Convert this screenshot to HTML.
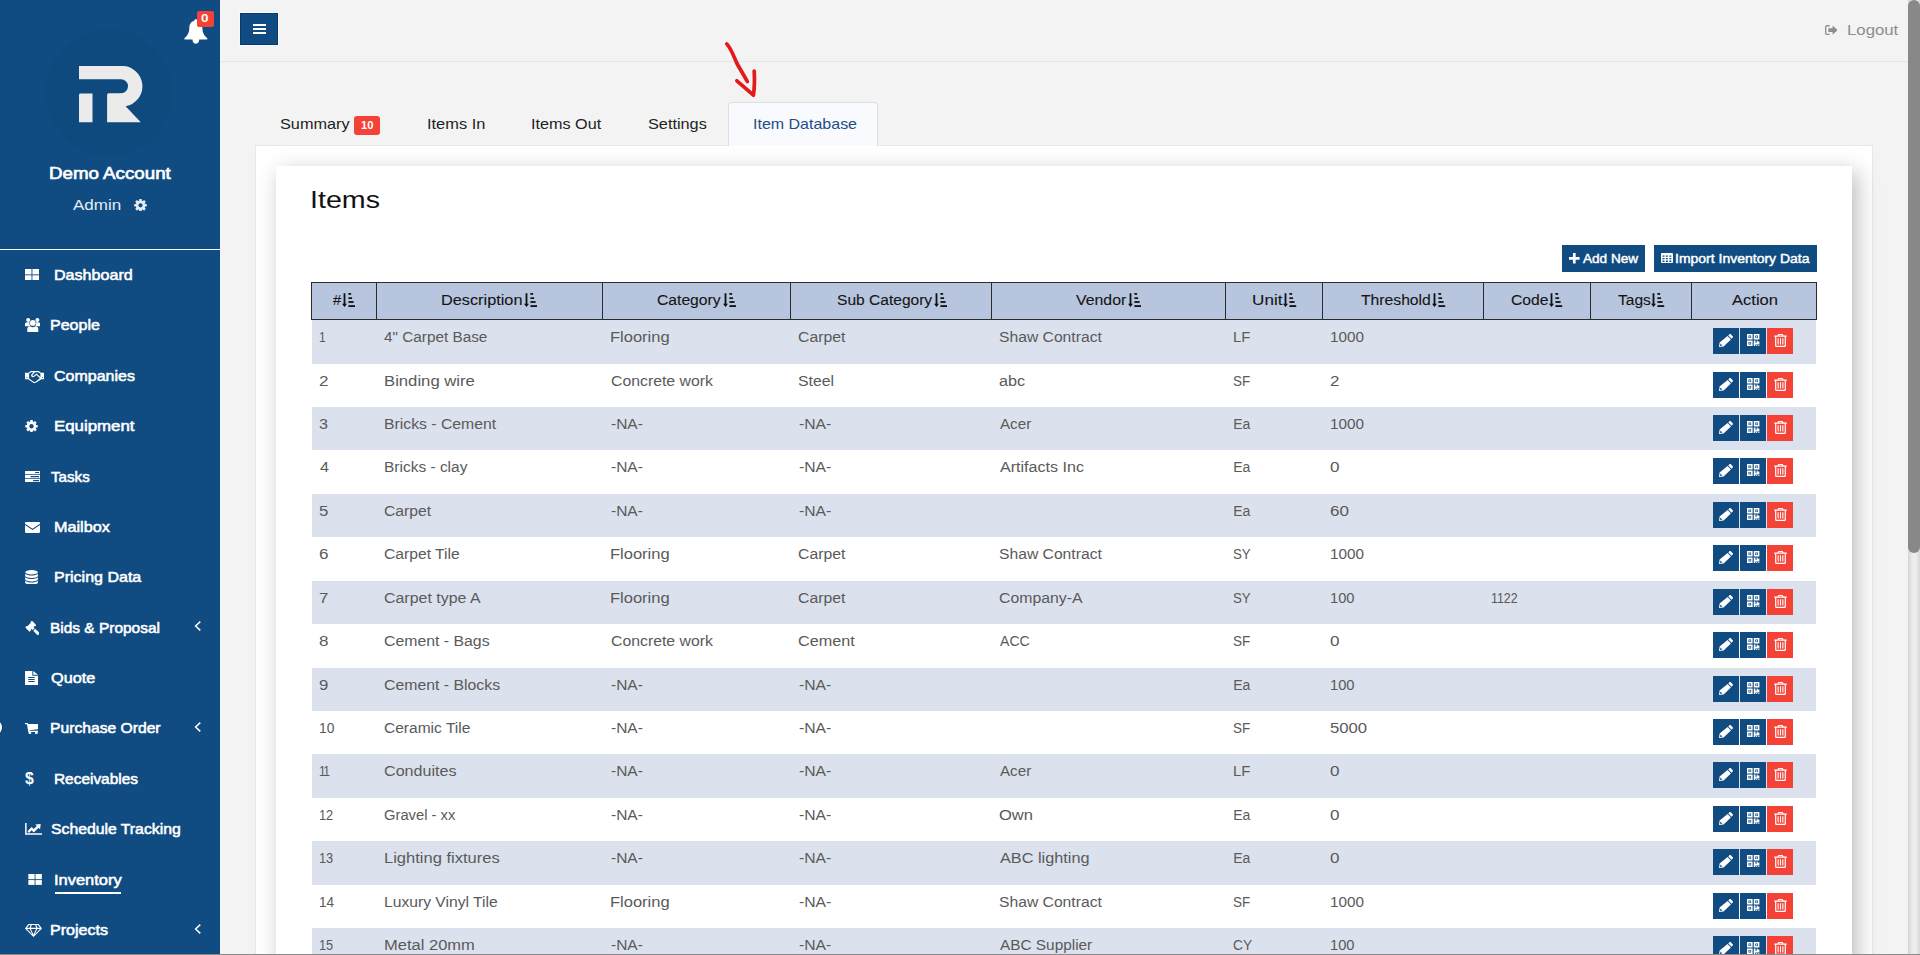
<!DOCTYPE html><html lang="en"><head><meta charset="utf-8"><title>Inventory - Item Database</title><style>
*{box-sizing:border-box;margin:0;padding:0}
html,body{width:1920px;height:955px;overflow:hidden}
body{background:#f3f3f3;font-family:"Liberation Sans", sans-serif;font-size:14px;color:#333;position:relative}
.abs{position:absolute}
.t{position:absolute;white-space:nowrap;line-height:1;transform-origin:0 0}
#side{position:absolute;left:0;top:0;width:220px;height:955px;background:#104b81;overflow:hidden}
#side .sep{position:absolute;left:0;top:249px;width:220px;height:1px;background:#fff}
#top{position:absolute;left:220px;top:0;width:1688px;height:62px;border-bottom:1px solid #e4e6e9}
#ham{position:absolute;left:240px;top:13px;width:38px;height:32px;background:#104b81;border:1px solid #053b70;box-shadow:0 0 0 1px #f9f9f9}
#panel{position:absolute;left:255px;top:145px;width:1618px;height:900px;background:#fff;border:1px solid #e4e8ee}
#card{position:absolute;left:276px;top:166px;width:1576px;height:900px;background:#fff;box-shadow:5px 6px 21px rgba(0,0,0,.27)}
#atab{position:absolute;left:728px;top:102px;width:150px;height:44px;background:#f8fafd;border:1px solid #dcdfe3;border-bottom:none;border-radius:4px 4px 0 0}
.btn{position:absolute;top:245px;height:27px;background:#104b81}
.th{position:absolute;top:282px;height:38px;background:#b7c6de;border:1px solid #2b2b2b}
.row{position:absolute;left:312px;width:1504px;background:#dbe1ed}
.ab{position:absolute;width:26px;height:26px}
#sb{position:absolute;left:1908px;top:0;width:12px;height:955px;background:linear-gradient(90deg,#d2d2d2 0,#e6e6e6 3px,#eeeeee 6px,#e8e8e8 9px,#d6d6d6 12px)}
#sbt{position:absolute;left:1908px;top:0;width:12px;height:553px;background:#888;border-radius:6px}
#bline{position:absolute;left:0;top:953.5px;width:1920px;height:1.5px;background:#8a8a8a}
</style></head><body>
<div id="top"></div><div id="ham"></div>
<div class="abs" style="left:253px;top:24px;width:13px;height:2px;background:#fff"></div>
<div class="abs" style="left:253px;top:28px;width:13px;height:2px;background:#fff"></div>
<div class="abs" style="left:253px;top:32px;width:13px;height:2px;background:#fff"></div>
<svg class="abs" style="left:1824.60px;top:24.80px" width="12.7" height="10.2" viewBox="0 0 12.7 10" fill="#8a8e92" ><path d="M4.6,0 V1.3 H2.2 C1.7,1.3 1.3,1.7 1.3,2.2 V7.8 C1.3,8.3 1.7,8.7 2.2,8.7 H4.6 V10 H2.2 C1,10 0,9 0,7.8 V2.2 C0,1 1,0 2.2,0Z"/><path d="M3.4,3.2 H7.6 V0.4 L12.7,5 L7.6,9.6 V6.8 H3.4Z"/></svg>
<div id="panel"></div><div id="atab"></div><div id="card"></div>
<div class="abs" style="left:354px;top:116px;width:26px;height:19px;background:#f44336;border-radius:3px"></div>
<svg class="abs" style="left:700px;top:30px" width="100" height="80" viewBox="700 30 100 80" fill="none" stroke="#e31a1a" stroke-width="3.7" stroke-linecap="round" stroke-linejoin="round"><path d="M726.8,44 C731,48 734,57 737,63.5 C740,69 745,77 747.3,81.5"/><path d="M736.9,80.8 L753.4,95.2 C754.5,88 754.6,78 754.2,71"/></svg>
<div class="btn" style="left:1562px;width:83px"></div>
<svg class="abs" style="left:1569.20px;top:253.20px" width="10.6" height="10.6" viewBox="0 0 11 11" fill="#fff" ><path d="M4.1,0 H6.9 V4.1 H11 V6.9 H6.9 V11 H4.1 V6.9 H0 V4.1 H4.1Z"/></svg>
<div class="btn" style="left:1654px;width:163px"></div>
<svg class="abs" style="left:1661.00px;top:253.20px" width="12" height="10" viewBox="0 0 12 10" fill="#fff" ><path fill-rule="evenodd" d="M1.1,0 H10.9 C11.5,0 12,0.5 12,1.1 V8.9 C12,9.5 11.5,10 10.9,10 H1.1 C0.5,10 0,9.5 0,8.9 V1.1 C0,0.5 0.5,0 1.1,0Z M1.50,2.42 V3.78 H3.50 V2.42Z M4.85,2.42 V3.78 H6.85 V2.42Z M8.30,2.42 V3.78 H10.30 V2.42Z M1.50,4.88 V6.22 H3.50 V4.88Z M4.85,4.88 V6.22 H6.85 V4.88Z M8.30,4.88 V6.22 H10.30 V4.88Z M1.50,7.58 V8.93 H3.50 V7.58Z M4.85,7.58 V8.93 H6.85 V7.58Z M8.30,7.58 V8.93 H10.30 V7.58Z"/></svg>
<div class="th" style="left:311px;width:66px"></div>
<div class="th" style="left:376px;width:227px"></div>
<div class="th" style="left:602px;width:189px"></div>
<div class="th" style="left:790px;width:202px"></div>
<div class="th" style="left:991px;width:235px"></div>
<div class="th" style="left:1225px;width:98px"></div>
<div class="th" style="left:1322px;width:162px"></div>
<div class="th" style="left:1483px;width:108px"></div>
<div class="th" style="left:1590px;width:102px"></div>
<div class="th" style="left:1691px;width:126px"></div>
<svg class="abs" style="left:341.80px;top:293.00px" width="13.5" height="14" viewBox="0 0 13.5 14" fill="#111" ><path d="M1.6,0.2 H3.4 V10.8 H5 L2.5,14 L0,10.8 H1.6Z"/><rect x="6.4" y="-0.2" width="2.7" height="2"/><rect x="6.4" y="4.3" width="3.7" height="1.7"/><rect x="6.4" y="8.1" width="5.2" height="1.8"/><rect x="6.4" y="12.2" width="6.8" height="1.8"/></svg>
<svg class="abs" style="left:523.70px;top:293.00px" width="13.5" height="14" viewBox="0 0 13.5 14" fill="#111" ><path d="M1.6,0.2 H3.4 V10.8 H5 L2.5,14 L0,10.8 H1.6Z"/><rect x="6.4" y="-0.2" width="2.7" height="2"/><rect x="6.4" y="4.3" width="3.7" height="1.7"/><rect x="6.4" y="8.1" width="5.2" height="1.8"/><rect x="6.4" y="12.2" width="6.8" height="1.8"/></svg>
<svg class="abs" style="left:722.70px;top:293.00px" width="13.5" height="14" viewBox="0 0 13.5 14" fill="#111" ><path d="M1.6,0.2 H3.4 V10.8 H5 L2.5,14 L0,10.8 H1.6Z"/><rect x="6.4" y="-0.2" width="2.7" height="2"/><rect x="6.4" y="4.3" width="3.7" height="1.7"/><rect x="6.4" y="8.1" width="5.2" height="1.8"/><rect x="6.4" y="12.2" width="6.8" height="1.8"/></svg>
<svg class="abs" style="left:933.50px;top:293.00px" width="13.5" height="14" viewBox="0 0 13.5 14" fill="#111" ><path d="M1.6,0.2 H3.4 V10.8 H5 L2.5,14 L0,10.8 H1.6Z"/><rect x="6.4" y="-0.2" width="2.7" height="2"/><rect x="6.4" y="4.3" width="3.7" height="1.7"/><rect x="6.4" y="8.1" width="5.2" height="1.8"/><rect x="6.4" y="12.2" width="6.8" height="1.8"/></svg>
<svg class="abs" style="left:1127.60px;top:293.00px" width="13.5" height="14" viewBox="0 0 13.5 14" fill="#111" ><path d="M1.6,0.2 H3.4 V10.8 H5 L2.5,14 L0,10.8 H1.6Z"/><rect x="6.4" y="-0.2" width="2.7" height="2"/><rect x="6.4" y="4.3" width="3.7" height="1.7"/><rect x="6.4" y="8.1" width="5.2" height="1.8"/><rect x="6.4" y="12.2" width="6.8" height="1.8"/></svg>
<svg class="abs" style="left:1283.30px;top:293.00px" width="13.5" height="14" viewBox="0 0 13.5 14" fill="#111" ><path d="M1.6,0.2 H3.4 V10.8 H5 L2.5,14 L0,10.8 H1.6Z"/><rect x="6.4" y="-0.2" width="2.7" height="2"/><rect x="6.4" y="4.3" width="3.7" height="1.7"/><rect x="6.4" y="8.1" width="5.2" height="1.8"/><rect x="6.4" y="12.2" width="6.8" height="1.8"/></svg>
<svg class="abs" style="left:1432.00px;top:293.00px" width="13.5" height="14" viewBox="0 0 13.5 14" fill="#111" ><path d="M1.6,0.2 H3.4 V10.8 H5 L2.5,14 L0,10.8 H1.6Z"/><rect x="6.4" y="-0.2" width="2.7" height="2"/><rect x="6.4" y="4.3" width="3.7" height="1.7"/><rect x="6.4" y="8.1" width="5.2" height="1.8"/><rect x="6.4" y="12.2" width="6.8" height="1.8"/></svg>
<svg class="abs" style="left:1549.20px;top:293.00px" width="13.5" height="14" viewBox="0 0 13.5 14" fill="#111" ><path d="M1.6,0.2 H3.4 V10.8 H5 L2.5,14 L0,10.8 H1.6Z"/><rect x="6.4" y="-0.2" width="2.7" height="2"/><rect x="6.4" y="4.3" width="3.7" height="1.7"/><rect x="6.4" y="8.1" width="5.2" height="1.8"/><rect x="6.4" y="12.2" width="6.8" height="1.8"/></svg>
<svg class="abs" style="left:1651.00px;top:293.00px" width="13.5" height="14" viewBox="0 0 13.5 14" fill="#111" ><path d="M1.6,0.2 H3.4 V10.8 H5 L2.5,14 L0,10.8 H1.6Z"/><rect x="6.4" y="-0.2" width="2.7" height="2"/><rect x="6.4" y="4.3" width="3.7" height="1.7"/><rect x="6.4" y="8.1" width="5.2" height="1.8"/><rect x="6.4" y="12.2" width="6.8" height="1.8"/></svg>
<div class="row" style="top:320px;height:44px"></div>
<div class="ab" style="left:1713px;top:328px;background:#104b81"></div>
<div class="ab" style="left:1740px;top:328px;background:#104b81"></div>
<div class="ab" style="left:1767px;top:328px;background:#f44336"></div>
<svg class="abs" style="left:1719.00px;top:334.00px" width="14" height="13" viewBox="0 0 14 13" fill="#fff" ><path d="M10.4,0.3 C10.8,-0.1 11.4,-0.1 11.8,0.3 L13.7,2.2 C14.1,2.6 14.1,3.2 13.7,3.6 L12.6,4.7 L9.3,1.4Z"/><path d="M8.6,2.1 L11.9,5.4 L4.6,12.4 L0,13 L0.6,8.6Z M1.4,9.6 L1.1,11.9 L3.4,11.6Z" fill-rule="evenodd"/></svg>
<svg class="abs" style="left:1747.00px;top:334.10px" width="12.8" height="12" viewBox="0 0 13 12" fill="#fff" ><path fill-rule="evenodd" d="M0,0 H5.7 V5.5 H0Z M1.5,1.5 V4 H4.2 V1.5Z M2.2,2.1 H3.5 V3.4 H2.2Z M6.9,0 H12.6 V5.5 H6.9Z M8.4,1.5 V4 H11.1 V1.5Z M9.1,2.1 H10.4 V3.4 H9.1Z M0,6.5 H5.7 V12 H0Z M1.5,8 V10.5 H4.2 V8Z M2.2,8.6 H3.5 V9.9 H2.2Z M6.9,6.5 H8.6 V8.8 H9.8 V6.5 H10.8 V7.6 H12.6 V10.6 H8.4 V12 H6.9Z M9.4,11.2 H10.4 V12 H9.4Z M11.6,11.2 H12.6 V12 H11.6Z"/></svg>
<svg class="abs" style="left:1773.90px;top:334.10px" width="13" height="13" viewBox="0 0 13 13" fill="#fff" ><path fill-rule="evenodd" d="M4.4,0 H8.6 L9.6,1.5 H12.4 C12.8,1.5 13,1.8 13,2.1 C13,2.5 12.8,2.7 12.4,2.7 H11.9 V11.4 C11.9,12.3 11.2,13 10.3,13 H2.7 C1.8,13 1.1,12.3 1.1,11.4 V2.7 H0.6 C0.2,2.7 0,2.5 0,2.1 C0,1.8 0.2,1.5 0.6,1.5 H3.4Z M5,1 L4.7,1.5 H8.3 L8,1Z M2.3,2.7 V11.3 C2.3,11.6 2.5,11.8 2.8,11.8 H10.2 C10.5,11.8 10.7,11.6 10.7,11.3 V2.7Z M3.6,4.2 H4.7 V10.4 H3.6Z M5.95,4.2 H7.05 V10.4 H5.95Z M8.3,4.2 H9.4 V10.4 H8.3Z"/></svg>
<div class="ab" style="left:1713px;top:372px;background:#104b81"></div>
<div class="ab" style="left:1740px;top:372px;background:#104b81"></div>
<div class="ab" style="left:1767px;top:372px;background:#f44336"></div>
<svg class="abs" style="left:1719.00px;top:378.00px" width="14" height="13" viewBox="0 0 14 13" fill="#fff" ><path d="M10.4,0.3 C10.8,-0.1 11.4,-0.1 11.8,0.3 L13.7,2.2 C14.1,2.6 14.1,3.2 13.7,3.6 L12.6,4.7 L9.3,1.4Z"/><path d="M8.6,2.1 L11.9,5.4 L4.6,12.4 L0,13 L0.6,8.6Z M1.4,9.6 L1.1,11.9 L3.4,11.6Z" fill-rule="evenodd"/></svg>
<svg class="abs" style="left:1747.00px;top:378.10px" width="12.8" height="12" viewBox="0 0 13 12" fill="#fff" ><path fill-rule="evenodd" d="M0,0 H5.7 V5.5 H0Z M1.5,1.5 V4 H4.2 V1.5Z M2.2,2.1 H3.5 V3.4 H2.2Z M6.9,0 H12.6 V5.5 H6.9Z M8.4,1.5 V4 H11.1 V1.5Z M9.1,2.1 H10.4 V3.4 H9.1Z M0,6.5 H5.7 V12 H0Z M1.5,8 V10.5 H4.2 V8Z M2.2,8.6 H3.5 V9.9 H2.2Z M6.9,6.5 H8.6 V8.8 H9.8 V6.5 H10.8 V7.6 H12.6 V10.6 H8.4 V12 H6.9Z M9.4,11.2 H10.4 V12 H9.4Z M11.6,11.2 H12.6 V12 H11.6Z"/></svg>
<svg class="abs" style="left:1773.90px;top:378.10px" width="13" height="13" viewBox="0 0 13 13" fill="#fff" ><path fill-rule="evenodd" d="M4.4,0 H8.6 L9.6,1.5 H12.4 C12.8,1.5 13,1.8 13,2.1 C13,2.5 12.8,2.7 12.4,2.7 H11.9 V11.4 C11.9,12.3 11.2,13 10.3,13 H2.7 C1.8,13 1.1,12.3 1.1,11.4 V2.7 H0.6 C0.2,2.7 0,2.5 0,2.1 C0,1.8 0.2,1.5 0.6,1.5 H3.4Z M5,1 L4.7,1.5 H8.3 L8,1Z M2.3,2.7 V11.3 C2.3,11.6 2.5,11.8 2.8,11.8 H10.2 C10.5,11.8 10.7,11.6 10.7,11.3 V2.7Z M3.6,4.2 H4.7 V10.4 H3.6Z M5.95,4.2 H7.05 V10.4 H5.95Z M8.3,4.2 H9.4 V10.4 H8.3Z"/></svg>
<div class="row" style="top:407px;height:43px"></div>
<div class="ab" style="left:1713px;top:415px;background:#104b81"></div>
<div class="ab" style="left:1740px;top:415px;background:#104b81"></div>
<div class="ab" style="left:1767px;top:415px;background:#f44336"></div>
<svg class="abs" style="left:1719.00px;top:421.00px" width="14" height="13" viewBox="0 0 14 13" fill="#fff" ><path d="M10.4,0.3 C10.8,-0.1 11.4,-0.1 11.8,0.3 L13.7,2.2 C14.1,2.6 14.1,3.2 13.7,3.6 L12.6,4.7 L9.3,1.4Z"/><path d="M8.6,2.1 L11.9,5.4 L4.6,12.4 L0,13 L0.6,8.6Z M1.4,9.6 L1.1,11.9 L3.4,11.6Z" fill-rule="evenodd"/></svg>
<svg class="abs" style="left:1747.00px;top:421.10px" width="12.8" height="12" viewBox="0 0 13 12" fill="#fff" ><path fill-rule="evenodd" d="M0,0 H5.7 V5.5 H0Z M1.5,1.5 V4 H4.2 V1.5Z M2.2,2.1 H3.5 V3.4 H2.2Z M6.9,0 H12.6 V5.5 H6.9Z M8.4,1.5 V4 H11.1 V1.5Z M9.1,2.1 H10.4 V3.4 H9.1Z M0,6.5 H5.7 V12 H0Z M1.5,8 V10.5 H4.2 V8Z M2.2,8.6 H3.5 V9.9 H2.2Z M6.9,6.5 H8.6 V8.8 H9.8 V6.5 H10.8 V7.6 H12.6 V10.6 H8.4 V12 H6.9Z M9.4,11.2 H10.4 V12 H9.4Z M11.6,11.2 H12.6 V12 H11.6Z"/></svg>
<svg class="abs" style="left:1773.90px;top:421.10px" width="13" height="13" viewBox="0 0 13 13" fill="#fff" ><path fill-rule="evenodd" d="M4.4,0 H8.6 L9.6,1.5 H12.4 C12.8,1.5 13,1.8 13,2.1 C13,2.5 12.8,2.7 12.4,2.7 H11.9 V11.4 C11.9,12.3 11.2,13 10.3,13 H2.7 C1.8,13 1.1,12.3 1.1,11.4 V2.7 H0.6 C0.2,2.7 0,2.5 0,2.1 C0,1.8 0.2,1.5 0.6,1.5 H3.4Z M5,1 L4.7,1.5 H8.3 L8,1Z M2.3,2.7 V11.3 C2.3,11.6 2.5,11.8 2.8,11.8 H10.2 C10.5,11.8 10.7,11.6 10.7,11.3 V2.7Z M3.6,4.2 H4.7 V10.4 H3.6Z M5.95,4.2 H7.05 V10.4 H5.95Z M8.3,4.2 H9.4 V10.4 H8.3Z"/></svg>
<div class="ab" style="left:1713px;top:458px;background:#104b81"></div>
<div class="ab" style="left:1740px;top:458px;background:#104b81"></div>
<div class="ab" style="left:1767px;top:458px;background:#f44336"></div>
<svg class="abs" style="left:1719.00px;top:464.00px" width="14" height="13" viewBox="0 0 14 13" fill="#fff" ><path d="M10.4,0.3 C10.8,-0.1 11.4,-0.1 11.8,0.3 L13.7,2.2 C14.1,2.6 14.1,3.2 13.7,3.6 L12.6,4.7 L9.3,1.4Z"/><path d="M8.6,2.1 L11.9,5.4 L4.6,12.4 L0,13 L0.6,8.6Z M1.4,9.6 L1.1,11.9 L3.4,11.6Z" fill-rule="evenodd"/></svg>
<svg class="abs" style="left:1747.00px;top:464.10px" width="12.8" height="12" viewBox="0 0 13 12" fill="#fff" ><path fill-rule="evenodd" d="M0,0 H5.7 V5.5 H0Z M1.5,1.5 V4 H4.2 V1.5Z M2.2,2.1 H3.5 V3.4 H2.2Z M6.9,0 H12.6 V5.5 H6.9Z M8.4,1.5 V4 H11.1 V1.5Z M9.1,2.1 H10.4 V3.4 H9.1Z M0,6.5 H5.7 V12 H0Z M1.5,8 V10.5 H4.2 V8Z M2.2,8.6 H3.5 V9.9 H2.2Z M6.9,6.5 H8.6 V8.8 H9.8 V6.5 H10.8 V7.6 H12.6 V10.6 H8.4 V12 H6.9Z M9.4,11.2 H10.4 V12 H9.4Z M11.6,11.2 H12.6 V12 H11.6Z"/></svg>
<svg class="abs" style="left:1773.90px;top:464.10px" width="13" height="13" viewBox="0 0 13 13" fill="#fff" ><path fill-rule="evenodd" d="M4.4,0 H8.6 L9.6,1.5 H12.4 C12.8,1.5 13,1.8 13,2.1 C13,2.5 12.8,2.7 12.4,2.7 H11.9 V11.4 C11.9,12.3 11.2,13 10.3,13 H2.7 C1.8,13 1.1,12.3 1.1,11.4 V2.7 H0.6 C0.2,2.7 0,2.5 0,2.1 C0,1.8 0.2,1.5 0.6,1.5 H3.4Z M5,1 L4.7,1.5 H8.3 L8,1Z M2.3,2.7 V11.3 C2.3,11.6 2.5,11.8 2.8,11.8 H10.2 C10.5,11.8 10.7,11.6 10.7,11.3 V2.7Z M3.6,4.2 H4.7 V10.4 H3.6Z M5.95,4.2 H7.05 V10.4 H5.95Z M8.3,4.2 H9.4 V10.4 H8.3Z"/></svg>
<div class="row" style="top:494px;height:43px"></div>
<div class="ab" style="left:1713px;top:502px;background:#104b81"></div>
<div class="ab" style="left:1740px;top:502px;background:#104b81"></div>
<div class="ab" style="left:1767px;top:502px;background:#f44336"></div>
<svg class="abs" style="left:1719.00px;top:508.00px" width="14" height="13" viewBox="0 0 14 13" fill="#fff" ><path d="M10.4,0.3 C10.8,-0.1 11.4,-0.1 11.8,0.3 L13.7,2.2 C14.1,2.6 14.1,3.2 13.7,3.6 L12.6,4.7 L9.3,1.4Z"/><path d="M8.6,2.1 L11.9,5.4 L4.6,12.4 L0,13 L0.6,8.6Z M1.4,9.6 L1.1,11.9 L3.4,11.6Z" fill-rule="evenodd"/></svg>
<svg class="abs" style="left:1747.00px;top:508.10px" width="12.8" height="12" viewBox="0 0 13 12" fill="#fff" ><path fill-rule="evenodd" d="M0,0 H5.7 V5.5 H0Z M1.5,1.5 V4 H4.2 V1.5Z M2.2,2.1 H3.5 V3.4 H2.2Z M6.9,0 H12.6 V5.5 H6.9Z M8.4,1.5 V4 H11.1 V1.5Z M9.1,2.1 H10.4 V3.4 H9.1Z M0,6.5 H5.7 V12 H0Z M1.5,8 V10.5 H4.2 V8Z M2.2,8.6 H3.5 V9.9 H2.2Z M6.9,6.5 H8.6 V8.8 H9.8 V6.5 H10.8 V7.6 H12.6 V10.6 H8.4 V12 H6.9Z M9.4,11.2 H10.4 V12 H9.4Z M11.6,11.2 H12.6 V12 H11.6Z"/></svg>
<svg class="abs" style="left:1773.90px;top:508.10px" width="13" height="13" viewBox="0 0 13 13" fill="#fff" ><path fill-rule="evenodd" d="M4.4,0 H8.6 L9.6,1.5 H12.4 C12.8,1.5 13,1.8 13,2.1 C13,2.5 12.8,2.7 12.4,2.7 H11.9 V11.4 C11.9,12.3 11.2,13 10.3,13 H2.7 C1.8,13 1.1,12.3 1.1,11.4 V2.7 H0.6 C0.2,2.7 0,2.5 0,2.1 C0,1.8 0.2,1.5 0.6,1.5 H3.4Z M5,1 L4.7,1.5 H8.3 L8,1Z M2.3,2.7 V11.3 C2.3,11.6 2.5,11.8 2.8,11.8 H10.2 C10.5,11.8 10.7,11.6 10.7,11.3 V2.7Z M3.6,4.2 H4.7 V10.4 H3.6Z M5.95,4.2 H7.05 V10.4 H5.95Z M8.3,4.2 H9.4 V10.4 H8.3Z"/></svg>
<div class="ab" style="left:1713px;top:545px;background:#104b81"></div>
<div class="ab" style="left:1740px;top:545px;background:#104b81"></div>
<div class="ab" style="left:1767px;top:545px;background:#f44336"></div>
<svg class="abs" style="left:1719.00px;top:551.00px" width="14" height="13" viewBox="0 0 14 13" fill="#fff" ><path d="M10.4,0.3 C10.8,-0.1 11.4,-0.1 11.8,0.3 L13.7,2.2 C14.1,2.6 14.1,3.2 13.7,3.6 L12.6,4.7 L9.3,1.4Z"/><path d="M8.6,2.1 L11.9,5.4 L4.6,12.4 L0,13 L0.6,8.6Z M1.4,9.6 L1.1,11.9 L3.4,11.6Z" fill-rule="evenodd"/></svg>
<svg class="abs" style="left:1747.00px;top:551.10px" width="12.8" height="12" viewBox="0 0 13 12" fill="#fff" ><path fill-rule="evenodd" d="M0,0 H5.7 V5.5 H0Z M1.5,1.5 V4 H4.2 V1.5Z M2.2,2.1 H3.5 V3.4 H2.2Z M6.9,0 H12.6 V5.5 H6.9Z M8.4,1.5 V4 H11.1 V1.5Z M9.1,2.1 H10.4 V3.4 H9.1Z M0,6.5 H5.7 V12 H0Z M1.5,8 V10.5 H4.2 V8Z M2.2,8.6 H3.5 V9.9 H2.2Z M6.9,6.5 H8.6 V8.8 H9.8 V6.5 H10.8 V7.6 H12.6 V10.6 H8.4 V12 H6.9Z M9.4,11.2 H10.4 V12 H9.4Z M11.6,11.2 H12.6 V12 H11.6Z"/></svg>
<svg class="abs" style="left:1773.90px;top:551.10px" width="13" height="13" viewBox="0 0 13 13" fill="#fff" ><path fill-rule="evenodd" d="M4.4,0 H8.6 L9.6,1.5 H12.4 C12.8,1.5 13,1.8 13,2.1 C13,2.5 12.8,2.7 12.4,2.7 H11.9 V11.4 C11.9,12.3 11.2,13 10.3,13 H2.7 C1.8,13 1.1,12.3 1.1,11.4 V2.7 H0.6 C0.2,2.7 0,2.5 0,2.1 C0,1.8 0.2,1.5 0.6,1.5 H3.4Z M5,1 L4.7,1.5 H8.3 L8,1Z M2.3,2.7 V11.3 C2.3,11.6 2.5,11.8 2.8,11.8 H10.2 C10.5,11.8 10.7,11.6 10.7,11.3 V2.7Z M3.6,4.2 H4.7 V10.4 H3.6Z M5.95,4.2 H7.05 V10.4 H5.95Z M8.3,4.2 H9.4 V10.4 H8.3Z"/></svg>
<div class="row" style="top:581px;height:43px"></div>
<div class="ab" style="left:1713px;top:589px;background:#104b81"></div>
<div class="ab" style="left:1740px;top:589px;background:#104b81"></div>
<div class="ab" style="left:1767px;top:589px;background:#f44336"></div>
<svg class="abs" style="left:1719.00px;top:595.00px" width="14" height="13" viewBox="0 0 14 13" fill="#fff" ><path d="M10.4,0.3 C10.8,-0.1 11.4,-0.1 11.8,0.3 L13.7,2.2 C14.1,2.6 14.1,3.2 13.7,3.6 L12.6,4.7 L9.3,1.4Z"/><path d="M8.6,2.1 L11.9,5.4 L4.6,12.4 L0,13 L0.6,8.6Z M1.4,9.6 L1.1,11.9 L3.4,11.6Z" fill-rule="evenodd"/></svg>
<svg class="abs" style="left:1747.00px;top:595.10px" width="12.8" height="12" viewBox="0 0 13 12" fill="#fff" ><path fill-rule="evenodd" d="M0,0 H5.7 V5.5 H0Z M1.5,1.5 V4 H4.2 V1.5Z M2.2,2.1 H3.5 V3.4 H2.2Z M6.9,0 H12.6 V5.5 H6.9Z M8.4,1.5 V4 H11.1 V1.5Z M9.1,2.1 H10.4 V3.4 H9.1Z M0,6.5 H5.7 V12 H0Z M1.5,8 V10.5 H4.2 V8Z M2.2,8.6 H3.5 V9.9 H2.2Z M6.9,6.5 H8.6 V8.8 H9.8 V6.5 H10.8 V7.6 H12.6 V10.6 H8.4 V12 H6.9Z M9.4,11.2 H10.4 V12 H9.4Z M11.6,11.2 H12.6 V12 H11.6Z"/></svg>
<svg class="abs" style="left:1773.90px;top:595.10px" width="13" height="13" viewBox="0 0 13 13" fill="#fff" ><path fill-rule="evenodd" d="M4.4,0 H8.6 L9.6,1.5 H12.4 C12.8,1.5 13,1.8 13,2.1 C13,2.5 12.8,2.7 12.4,2.7 H11.9 V11.4 C11.9,12.3 11.2,13 10.3,13 H2.7 C1.8,13 1.1,12.3 1.1,11.4 V2.7 H0.6 C0.2,2.7 0,2.5 0,2.1 C0,1.8 0.2,1.5 0.6,1.5 H3.4Z M5,1 L4.7,1.5 H8.3 L8,1Z M2.3,2.7 V11.3 C2.3,11.6 2.5,11.8 2.8,11.8 H10.2 C10.5,11.8 10.7,11.6 10.7,11.3 V2.7Z M3.6,4.2 H4.7 V10.4 H3.6Z M5.95,4.2 H7.05 V10.4 H5.95Z M8.3,4.2 H9.4 V10.4 H8.3Z"/></svg>
<div class="ab" style="left:1713px;top:632px;background:#104b81"></div>
<div class="ab" style="left:1740px;top:632px;background:#104b81"></div>
<div class="ab" style="left:1767px;top:632px;background:#f44336"></div>
<svg class="abs" style="left:1719.00px;top:638.00px" width="14" height="13" viewBox="0 0 14 13" fill="#fff" ><path d="M10.4,0.3 C10.8,-0.1 11.4,-0.1 11.8,0.3 L13.7,2.2 C14.1,2.6 14.1,3.2 13.7,3.6 L12.6,4.7 L9.3,1.4Z"/><path d="M8.6,2.1 L11.9,5.4 L4.6,12.4 L0,13 L0.6,8.6Z M1.4,9.6 L1.1,11.9 L3.4,11.6Z" fill-rule="evenodd"/></svg>
<svg class="abs" style="left:1747.00px;top:638.10px" width="12.8" height="12" viewBox="0 0 13 12" fill="#fff" ><path fill-rule="evenodd" d="M0,0 H5.7 V5.5 H0Z M1.5,1.5 V4 H4.2 V1.5Z M2.2,2.1 H3.5 V3.4 H2.2Z M6.9,0 H12.6 V5.5 H6.9Z M8.4,1.5 V4 H11.1 V1.5Z M9.1,2.1 H10.4 V3.4 H9.1Z M0,6.5 H5.7 V12 H0Z M1.5,8 V10.5 H4.2 V8Z M2.2,8.6 H3.5 V9.9 H2.2Z M6.9,6.5 H8.6 V8.8 H9.8 V6.5 H10.8 V7.6 H12.6 V10.6 H8.4 V12 H6.9Z M9.4,11.2 H10.4 V12 H9.4Z M11.6,11.2 H12.6 V12 H11.6Z"/></svg>
<svg class="abs" style="left:1773.90px;top:638.10px" width="13" height="13" viewBox="0 0 13 13" fill="#fff" ><path fill-rule="evenodd" d="M4.4,0 H8.6 L9.6,1.5 H12.4 C12.8,1.5 13,1.8 13,2.1 C13,2.5 12.8,2.7 12.4,2.7 H11.9 V11.4 C11.9,12.3 11.2,13 10.3,13 H2.7 C1.8,13 1.1,12.3 1.1,11.4 V2.7 H0.6 C0.2,2.7 0,2.5 0,2.1 C0,1.8 0.2,1.5 0.6,1.5 H3.4Z M5,1 L4.7,1.5 H8.3 L8,1Z M2.3,2.7 V11.3 C2.3,11.6 2.5,11.8 2.8,11.8 H10.2 C10.5,11.8 10.7,11.6 10.7,11.3 V2.7Z M3.6,4.2 H4.7 V10.4 H3.6Z M5.95,4.2 H7.05 V10.4 H5.95Z M8.3,4.2 H9.4 V10.4 H8.3Z"/></svg>
<div class="row" style="top:668px;height:43px"></div>
<div class="ab" style="left:1713px;top:676px;background:#104b81"></div>
<div class="ab" style="left:1740px;top:676px;background:#104b81"></div>
<div class="ab" style="left:1767px;top:676px;background:#f44336"></div>
<svg class="abs" style="left:1719.00px;top:682.00px" width="14" height="13" viewBox="0 0 14 13" fill="#fff" ><path d="M10.4,0.3 C10.8,-0.1 11.4,-0.1 11.8,0.3 L13.7,2.2 C14.1,2.6 14.1,3.2 13.7,3.6 L12.6,4.7 L9.3,1.4Z"/><path d="M8.6,2.1 L11.9,5.4 L4.6,12.4 L0,13 L0.6,8.6Z M1.4,9.6 L1.1,11.9 L3.4,11.6Z" fill-rule="evenodd"/></svg>
<svg class="abs" style="left:1747.00px;top:682.10px" width="12.8" height="12" viewBox="0 0 13 12" fill="#fff" ><path fill-rule="evenodd" d="M0,0 H5.7 V5.5 H0Z M1.5,1.5 V4 H4.2 V1.5Z M2.2,2.1 H3.5 V3.4 H2.2Z M6.9,0 H12.6 V5.5 H6.9Z M8.4,1.5 V4 H11.1 V1.5Z M9.1,2.1 H10.4 V3.4 H9.1Z M0,6.5 H5.7 V12 H0Z M1.5,8 V10.5 H4.2 V8Z M2.2,8.6 H3.5 V9.9 H2.2Z M6.9,6.5 H8.6 V8.8 H9.8 V6.5 H10.8 V7.6 H12.6 V10.6 H8.4 V12 H6.9Z M9.4,11.2 H10.4 V12 H9.4Z M11.6,11.2 H12.6 V12 H11.6Z"/></svg>
<svg class="abs" style="left:1773.90px;top:682.10px" width="13" height="13" viewBox="0 0 13 13" fill="#fff" ><path fill-rule="evenodd" d="M4.4,0 H8.6 L9.6,1.5 H12.4 C12.8,1.5 13,1.8 13,2.1 C13,2.5 12.8,2.7 12.4,2.7 H11.9 V11.4 C11.9,12.3 11.2,13 10.3,13 H2.7 C1.8,13 1.1,12.3 1.1,11.4 V2.7 H0.6 C0.2,2.7 0,2.5 0,2.1 C0,1.8 0.2,1.5 0.6,1.5 H3.4Z M5,1 L4.7,1.5 H8.3 L8,1Z M2.3,2.7 V11.3 C2.3,11.6 2.5,11.8 2.8,11.8 H10.2 C10.5,11.8 10.7,11.6 10.7,11.3 V2.7Z M3.6,4.2 H4.7 V10.4 H3.6Z M5.95,4.2 H7.05 V10.4 H5.95Z M8.3,4.2 H9.4 V10.4 H8.3Z"/></svg>
<div class="ab" style="left:1713px;top:719px;background:#104b81"></div>
<div class="ab" style="left:1740px;top:719px;background:#104b81"></div>
<div class="ab" style="left:1767px;top:719px;background:#f44336"></div>
<svg class="abs" style="left:1719.00px;top:725.00px" width="14" height="13" viewBox="0 0 14 13" fill="#fff" ><path d="M10.4,0.3 C10.8,-0.1 11.4,-0.1 11.8,0.3 L13.7,2.2 C14.1,2.6 14.1,3.2 13.7,3.6 L12.6,4.7 L9.3,1.4Z"/><path d="M8.6,2.1 L11.9,5.4 L4.6,12.4 L0,13 L0.6,8.6Z M1.4,9.6 L1.1,11.9 L3.4,11.6Z" fill-rule="evenodd"/></svg>
<svg class="abs" style="left:1747.00px;top:725.10px" width="12.8" height="12" viewBox="0 0 13 12" fill="#fff" ><path fill-rule="evenodd" d="M0,0 H5.7 V5.5 H0Z M1.5,1.5 V4 H4.2 V1.5Z M2.2,2.1 H3.5 V3.4 H2.2Z M6.9,0 H12.6 V5.5 H6.9Z M8.4,1.5 V4 H11.1 V1.5Z M9.1,2.1 H10.4 V3.4 H9.1Z M0,6.5 H5.7 V12 H0Z M1.5,8 V10.5 H4.2 V8Z M2.2,8.6 H3.5 V9.9 H2.2Z M6.9,6.5 H8.6 V8.8 H9.8 V6.5 H10.8 V7.6 H12.6 V10.6 H8.4 V12 H6.9Z M9.4,11.2 H10.4 V12 H9.4Z M11.6,11.2 H12.6 V12 H11.6Z"/></svg>
<svg class="abs" style="left:1773.90px;top:725.10px" width="13" height="13" viewBox="0 0 13 13" fill="#fff" ><path fill-rule="evenodd" d="M4.4,0 H8.6 L9.6,1.5 H12.4 C12.8,1.5 13,1.8 13,2.1 C13,2.5 12.8,2.7 12.4,2.7 H11.9 V11.4 C11.9,12.3 11.2,13 10.3,13 H2.7 C1.8,13 1.1,12.3 1.1,11.4 V2.7 H0.6 C0.2,2.7 0,2.5 0,2.1 C0,1.8 0.2,1.5 0.6,1.5 H3.4Z M5,1 L4.7,1.5 H8.3 L8,1Z M2.3,2.7 V11.3 C2.3,11.6 2.5,11.8 2.8,11.8 H10.2 C10.5,11.8 10.7,11.6 10.7,11.3 V2.7Z M3.6,4.2 H4.7 V10.4 H3.6Z M5.95,4.2 H7.05 V10.4 H5.95Z M8.3,4.2 H9.4 V10.4 H8.3Z"/></svg>
<div class="row" style="top:754px;height:44px"></div>
<div class="ab" style="left:1713px;top:762px;background:#104b81"></div>
<div class="ab" style="left:1740px;top:762px;background:#104b81"></div>
<div class="ab" style="left:1767px;top:762px;background:#f44336"></div>
<svg class="abs" style="left:1719.00px;top:768.00px" width="14" height="13" viewBox="0 0 14 13" fill="#fff" ><path d="M10.4,0.3 C10.8,-0.1 11.4,-0.1 11.8,0.3 L13.7,2.2 C14.1,2.6 14.1,3.2 13.7,3.6 L12.6,4.7 L9.3,1.4Z"/><path d="M8.6,2.1 L11.9,5.4 L4.6,12.4 L0,13 L0.6,8.6Z M1.4,9.6 L1.1,11.9 L3.4,11.6Z" fill-rule="evenodd"/></svg>
<svg class="abs" style="left:1747.00px;top:768.10px" width="12.8" height="12" viewBox="0 0 13 12" fill="#fff" ><path fill-rule="evenodd" d="M0,0 H5.7 V5.5 H0Z M1.5,1.5 V4 H4.2 V1.5Z M2.2,2.1 H3.5 V3.4 H2.2Z M6.9,0 H12.6 V5.5 H6.9Z M8.4,1.5 V4 H11.1 V1.5Z M9.1,2.1 H10.4 V3.4 H9.1Z M0,6.5 H5.7 V12 H0Z M1.5,8 V10.5 H4.2 V8Z M2.2,8.6 H3.5 V9.9 H2.2Z M6.9,6.5 H8.6 V8.8 H9.8 V6.5 H10.8 V7.6 H12.6 V10.6 H8.4 V12 H6.9Z M9.4,11.2 H10.4 V12 H9.4Z M11.6,11.2 H12.6 V12 H11.6Z"/></svg>
<svg class="abs" style="left:1773.90px;top:768.10px" width="13" height="13" viewBox="0 0 13 13" fill="#fff" ><path fill-rule="evenodd" d="M4.4,0 H8.6 L9.6,1.5 H12.4 C12.8,1.5 13,1.8 13,2.1 C13,2.5 12.8,2.7 12.4,2.7 H11.9 V11.4 C11.9,12.3 11.2,13 10.3,13 H2.7 C1.8,13 1.1,12.3 1.1,11.4 V2.7 H0.6 C0.2,2.7 0,2.5 0,2.1 C0,1.8 0.2,1.5 0.6,1.5 H3.4Z M5,1 L4.7,1.5 H8.3 L8,1Z M2.3,2.7 V11.3 C2.3,11.6 2.5,11.8 2.8,11.8 H10.2 C10.5,11.8 10.7,11.6 10.7,11.3 V2.7Z M3.6,4.2 H4.7 V10.4 H3.6Z M5.95,4.2 H7.05 V10.4 H5.95Z M8.3,4.2 H9.4 V10.4 H8.3Z"/></svg>
<div class="ab" style="left:1713px;top:806px;background:#104b81"></div>
<div class="ab" style="left:1740px;top:806px;background:#104b81"></div>
<div class="ab" style="left:1767px;top:806px;background:#f44336"></div>
<svg class="abs" style="left:1719.00px;top:812.00px" width="14" height="13" viewBox="0 0 14 13" fill="#fff" ><path d="M10.4,0.3 C10.8,-0.1 11.4,-0.1 11.8,0.3 L13.7,2.2 C14.1,2.6 14.1,3.2 13.7,3.6 L12.6,4.7 L9.3,1.4Z"/><path d="M8.6,2.1 L11.9,5.4 L4.6,12.4 L0,13 L0.6,8.6Z M1.4,9.6 L1.1,11.9 L3.4,11.6Z" fill-rule="evenodd"/></svg>
<svg class="abs" style="left:1747.00px;top:812.10px" width="12.8" height="12" viewBox="0 0 13 12" fill="#fff" ><path fill-rule="evenodd" d="M0,0 H5.7 V5.5 H0Z M1.5,1.5 V4 H4.2 V1.5Z M2.2,2.1 H3.5 V3.4 H2.2Z M6.9,0 H12.6 V5.5 H6.9Z M8.4,1.5 V4 H11.1 V1.5Z M9.1,2.1 H10.4 V3.4 H9.1Z M0,6.5 H5.7 V12 H0Z M1.5,8 V10.5 H4.2 V8Z M2.2,8.6 H3.5 V9.9 H2.2Z M6.9,6.5 H8.6 V8.8 H9.8 V6.5 H10.8 V7.6 H12.6 V10.6 H8.4 V12 H6.9Z M9.4,11.2 H10.4 V12 H9.4Z M11.6,11.2 H12.6 V12 H11.6Z"/></svg>
<svg class="abs" style="left:1773.90px;top:812.10px" width="13" height="13" viewBox="0 0 13 13" fill="#fff" ><path fill-rule="evenodd" d="M4.4,0 H8.6 L9.6,1.5 H12.4 C12.8,1.5 13,1.8 13,2.1 C13,2.5 12.8,2.7 12.4,2.7 H11.9 V11.4 C11.9,12.3 11.2,13 10.3,13 H2.7 C1.8,13 1.1,12.3 1.1,11.4 V2.7 H0.6 C0.2,2.7 0,2.5 0,2.1 C0,1.8 0.2,1.5 0.6,1.5 H3.4Z M5,1 L4.7,1.5 H8.3 L8,1Z M2.3,2.7 V11.3 C2.3,11.6 2.5,11.8 2.8,11.8 H10.2 C10.5,11.8 10.7,11.6 10.7,11.3 V2.7Z M3.6,4.2 H4.7 V10.4 H3.6Z M5.95,4.2 H7.05 V10.4 H5.95Z M8.3,4.2 H9.4 V10.4 H8.3Z"/></svg>
<div class="row" style="top:841px;height:44px"></div>
<div class="ab" style="left:1713px;top:849px;background:#104b81"></div>
<div class="ab" style="left:1740px;top:849px;background:#104b81"></div>
<div class="ab" style="left:1767px;top:849px;background:#f44336"></div>
<svg class="abs" style="left:1719.00px;top:855.00px" width="14" height="13" viewBox="0 0 14 13" fill="#fff" ><path d="M10.4,0.3 C10.8,-0.1 11.4,-0.1 11.8,0.3 L13.7,2.2 C14.1,2.6 14.1,3.2 13.7,3.6 L12.6,4.7 L9.3,1.4Z"/><path d="M8.6,2.1 L11.9,5.4 L4.6,12.4 L0,13 L0.6,8.6Z M1.4,9.6 L1.1,11.9 L3.4,11.6Z" fill-rule="evenodd"/></svg>
<svg class="abs" style="left:1747.00px;top:855.10px" width="12.8" height="12" viewBox="0 0 13 12" fill="#fff" ><path fill-rule="evenodd" d="M0,0 H5.7 V5.5 H0Z M1.5,1.5 V4 H4.2 V1.5Z M2.2,2.1 H3.5 V3.4 H2.2Z M6.9,0 H12.6 V5.5 H6.9Z M8.4,1.5 V4 H11.1 V1.5Z M9.1,2.1 H10.4 V3.4 H9.1Z M0,6.5 H5.7 V12 H0Z M1.5,8 V10.5 H4.2 V8Z M2.2,8.6 H3.5 V9.9 H2.2Z M6.9,6.5 H8.6 V8.8 H9.8 V6.5 H10.8 V7.6 H12.6 V10.6 H8.4 V12 H6.9Z M9.4,11.2 H10.4 V12 H9.4Z M11.6,11.2 H12.6 V12 H11.6Z"/></svg>
<svg class="abs" style="left:1773.90px;top:855.10px" width="13" height="13" viewBox="0 0 13 13" fill="#fff" ><path fill-rule="evenodd" d="M4.4,0 H8.6 L9.6,1.5 H12.4 C12.8,1.5 13,1.8 13,2.1 C13,2.5 12.8,2.7 12.4,2.7 H11.9 V11.4 C11.9,12.3 11.2,13 10.3,13 H2.7 C1.8,13 1.1,12.3 1.1,11.4 V2.7 H0.6 C0.2,2.7 0,2.5 0,2.1 C0,1.8 0.2,1.5 0.6,1.5 H3.4Z M5,1 L4.7,1.5 H8.3 L8,1Z M2.3,2.7 V11.3 C2.3,11.6 2.5,11.8 2.8,11.8 H10.2 C10.5,11.8 10.7,11.6 10.7,11.3 V2.7Z M3.6,4.2 H4.7 V10.4 H3.6Z M5.95,4.2 H7.05 V10.4 H5.95Z M8.3,4.2 H9.4 V10.4 H8.3Z"/></svg>
<div class="ab" style="left:1713px;top:893px;background:#104b81"></div>
<div class="ab" style="left:1740px;top:893px;background:#104b81"></div>
<div class="ab" style="left:1767px;top:893px;background:#f44336"></div>
<svg class="abs" style="left:1719.00px;top:899.00px" width="14" height="13" viewBox="0 0 14 13" fill="#fff" ><path d="M10.4,0.3 C10.8,-0.1 11.4,-0.1 11.8,0.3 L13.7,2.2 C14.1,2.6 14.1,3.2 13.7,3.6 L12.6,4.7 L9.3,1.4Z"/><path d="M8.6,2.1 L11.9,5.4 L4.6,12.4 L0,13 L0.6,8.6Z M1.4,9.6 L1.1,11.9 L3.4,11.6Z" fill-rule="evenodd"/></svg>
<svg class="abs" style="left:1747.00px;top:899.10px" width="12.8" height="12" viewBox="0 0 13 12" fill="#fff" ><path fill-rule="evenodd" d="M0,0 H5.7 V5.5 H0Z M1.5,1.5 V4 H4.2 V1.5Z M2.2,2.1 H3.5 V3.4 H2.2Z M6.9,0 H12.6 V5.5 H6.9Z M8.4,1.5 V4 H11.1 V1.5Z M9.1,2.1 H10.4 V3.4 H9.1Z M0,6.5 H5.7 V12 H0Z M1.5,8 V10.5 H4.2 V8Z M2.2,8.6 H3.5 V9.9 H2.2Z M6.9,6.5 H8.6 V8.8 H9.8 V6.5 H10.8 V7.6 H12.6 V10.6 H8.4 V12 H6.9Z M9.4,11.2 H10.4 V12 H9.4Z M11.6,11.2 H12.6 V12 H11.6Z"/></svg>
<svg class="abs" style="left:1773.90px;top:899.10px" width="13" height="13" viewBox="0 0 13 13" fill="#fff" ><path fill-rule="evenodd" d="M4.4,0 H8.6 L9.6,1.5 H12.4 C12.8,1.5 13,1.8 13,2.1 C13,2.5 12.8,2.7 12.4,2.7 H11.9 V11.4 C11.9,12.3 11.2,13 10.3,13 H2.7 C1.8,13 1.1,12.3 1.1,11.4 V2.7 H0.6 C0.2,2.7 0,2.5 0,2.1 C0,1.8 0.2,1.5 0.6,1.5 H3.4Z M5,1 L4.7,1.5 H8.3 L8,1Z M2.3,2.7 V11.3 C2.3,11.6 2.5,11.8 2.8,11.8 H10.2 C10.5,11.8 10.7,11.6 10.7,11.3 V2.7Z M3.6,4.2 H4.7 V10.4 H3.6Z M5.95,4.2 H7.05 V10.4 H5.95Z M8.3,4.2 H9.4 V10.4 H8.3Z"/></svg>
<div class="row" style="top:928px;height:43px"></div>
<div class="ab" style="left:1713px;top:936px;background:#104b81"></div>
<div class="ab" style="left:1740px;top:936px;background:#104b81"></div>
<div class="ab" style="left:1767px;top:936px;background:#f44336"></div>
<svg class="abs" style="left:1719.00px;top:942.00px" width="14" height="13" viewBox="0 0 14 13" fill="#fff" ><path d="M10.4,0.3 C10.8,-0.1 11.4,-0.1 11.8,0.3 L13.7,2.2 C14.1,2.6 14.1,3.2 13.7,3.6 L12.6,4.7 L9.3,1.4Z"/><path d="M8.6,2.1 L11.9,5.4 L4.6,12.4 L0,13 L0.6,8.6Z M1.4,9.6 L1.1,11.9 L3.4,11.6Z" fill-rule="evenodd"/></svg>
<svg class="abs" style="left:1747.00px;top:942.10px" width="12.8" height="12" viewBox="0 0 13 12" fill="#fff" ><path fill-rule="evenodd" d="M0,0 H5.7 V5.5 H0Z M1.5,1.5 V4 H4.2 V1.5Z M2.2,2.1 H3.5 V3.4 H2.2Z M6.9,0 H12.6 V5.5 H6.9Z M8.4,1.5 V4 H11.1 V1.5Z M9.1,2.1 H10.4 V3.4 H9.1Z M0,6.5 H5.7 V12 H0Z M1.5,8 V10.5 H4.2 V8Z M2.2,8.6 H3.5 V9.9 H2.2Z M6.9,6.5 H8.6 V8.8 H9.8 V6.5 H10.8 V7.6 H12.6 V10.6 H8.4 V12 H6.9Z M9.4,11.2 H10.4 V12 H9.4Z M11.6,11.2 H12.6 V12 H11.6Z"/></svg>
<svg class="abs" style="left:1773.90px;top:942.10px" width="13" height="13" viewBox="0 0 13 13" fill="#fff" ><path fill-rule="evenodd" d="M4.4,0 H8.6 L9.6,1.5 H12.4 C12.8,1.5 13,1.8 13,2.1 C13,2.5 12.8,2.7 12.4,2.7 H11.9 V11.4 C11.9,12.3 11.2,13 10.3,13 H2.7 C1.8,13 1.1,12.3 1.1,11.4 V2.7 H0.6 C0.2,2.7 0,2.5 0,2.1 C0,1.8 0.2,1.5 0.6,1.5 H3.4Z M5,1 L4.7,1.5 H8.3 L8,1Z M2.3,2.7 V11.3 C2.3,11.6 2.5,11.8 2.8,11.8 H10.2 C10.5,11.8 10.7,11.6 10.7,11.3 V2.7Z M3.6,4.2 H4.7 V10.4 H3.6Z M5.95,4.2 H7.05 V10.4 H5.95Z M8.3,4.2 H9.4 V10.4 H8.3Z"/></svg>
<div id="side"><div class="sep"></div></div>
<div class="abs" style="left:44.5px;top:29px;width:128px;height:128px;border-radius:50%;background:rgba(0,0,30,.006)"></div>
<svg class="abs" style="left:184.30px;top:18.90px" width="23.7" height="25" viewBox="0 0 24 25" fill="#fff" ><path d="M12,0 C13,0 13.6,0.7 13.6,1.6 C17.2,2.5 18.6,5.6 18.6,9 C18.6,13.6 20.2,16.6 23.6,19.4 C23.9,19.7 23.8,20.6 23,20.6 H15.4 C15.4,23.6 13.6,25 12,25 C10.4,25 8.6,23.6 8.6,20.6 H1 C0.2,20.6 0.1,19.7 0.4,19.4 C3.8,16.6 5.4,13.6 5.4,9 C5.4,5.6 6.8,2.5 10.4,1.6 C10.4,0.7 11,0 12,0Z"/></svg>
<div class="abs" style="left:197px;top:11px;width:17px;height:16px;background:#f44336;border-radius:2px"></div>
<svg class="abs" style="left:79px;top:66px" width="64" height="57" viewBox="0 0 64 57" fill="#ebebeb"><path d="M0,0 H42.75 A20.25,20.25 0 0 1 46.6,40.2 L61.8,56.3 H28.1 V28.8 Q28.1,27.2 29.7,27.2 H42 A7,7 0 0 0 42,13.2 H0Z"/><path d="M0,29 Q0,27.6 1.4,27.6 H13.5 V56.3 H0Z"/></svg>
<svg class="abs" style="left:134.00px;top:198.70px" width="13" height="12.6" viewBox="0 0 13 13" fill="#e6ebf2" ><path fill-rule="evenodd" d="M5.16,1.68 L5.19,0.03 L7.81,0.03 L7.84,1.68 L8.96,2.15 L10.15,1.00 L12.00,2.85 L10.85,4.04 L11.32,5.16 L12.97,5.19 L12.97,7.81 L11.32,7.84 L10.85,8.96 L12.00,10.15 L10.15,12.00 L8.96,10.85 L7.84,11.32 L7.81,12.97 L5.19,12.97 L5.16,11.32 L4.04,10.85 L2.85,12.00 L1.00,10.15 L2.15,8.96 L1.68,7.84 L0.03,7.81 L0.03,5.19 L1.68,5.16 L2.15,4.04 L1.00,2.85 L2.85,1.00 L4.04,2.15Z M4.30,6.50 a2.2,2.2 0 1,0 4.4,0 a2.2,2.2 0 1,0 -4.4,0Z"/></svg>
<div class="abs" style="left:-15.6px;top:719.2px;width:17.4px;height:17.2px;border-radius:50%;background:#fff;box-shadow:0 0 0 1px #0a3c70"></div>
<svg class="abs" style="left:24.60px;top:268.80px" width="14" height="11.3" viewBox="0 0 14 11.3" fill="#fff" ><rect x="0" y="0" width="6.5" height="5.4"/><rect x="7.4" y="0" width="6.6" height="5.4"/><rect x="0" y="6.3" width="6.5" height="5"/><rect x="7.4" y="6.3" width="6.6" height="5"/></svg>
<svg class="abs" style="left:24.90px;top:317.70px" width="15.6" height="14.3" viewBox="0 0 15.6 14.3" fill="#fff" ><circle cx="3.2" cy="2" r="2"/><circle cx="12.4" cy="2" r="2"/><path d="M0,8.3 V6.4 C0,5 1,4.3 2.2,4.3 H4.6 C4.2,5.6 4.5,7 5.5,8.3Z"/><path d="M15.6,8.3 V6.4 C15.6,5 14.6,4.3 13.4,4.3 H11 C11.4,5.6 11.1,7 10.1,8.3Z"/><circle cx="7.8" cy="4.9" r="2.9"/><path d="M2.3,14.3 V11 C2.3,9.2 3.6,8.4 5,8.3 C5.8,8.9 6.8,9.2 7.8,9.2 C8.8,9.2 9.8,8.9 10.6,8.3 C12,8.4 13.3,9.2 13.3,11 V14.3Z"/></svg>
<svg class="abs" style="left:24.60px;top:370.90px" width="19.5" height="12" viewBox="0 0 19.5 12" fill="#fff" ><path fill-rule="evenodd" d="M0,1.8 H3.6 L5.8,0 H13.7 L15.9,1.8 H19.5 V8.2 H16.4 L10.4,12 H8.6 L3.1,8.2 H0Z M1.5,6.5 a0.5,0.5 0 1,0 1,0 a0.5,0.5 0 1,0 -1,0Z M17,6.5 a0.5,0.5 0 1,0 1,0 a0.5,0.5 0 1,0 -1,0Z M4.1,2.6 V7.5 L8.6,10.7 C9.1,11.1 9.9,11.1 10.4,10.7 L14.9,7.2 L11.4,3.9 L9.6,5.5 C8.6,6.4 7.2,6.3 6.5,5.5 C5.9,4.8 6,3.9 6.6,3.3 L8.4,1.3 H6.2Z M10,1.3 L7.7,3.8 C7.4,4.2 7.5,4.6 7.7,4.8 C8,5.1 8.5,5 8.8,4.8 L11.4,2.4 L15.4,6.1 V2.7 L13.3,1.3Z"/></svg>
<svg class="abs" style="left:24.60px;top:419.80px" width="13" height="12.4" viewBox="0 0 13 13" fill="#fff" ><path fill-rule="evenodd" d="M5.16,1.68 L5.19,0.03 L7.81,0.03 L7.84,1.68 L8.96,2.15 L10.15,1.00 L12.00,2.85 L10.85,4.04 L11.32,5.16 L12.97,5.19 L12.97,7.81 L11.32,7.84 L10.85,8.96 L12.00,10.15 L10.15,12.00 L8.96,10.85 L7.84,11.32 L7.81,12.97 L5.19,12.97 L5.16,11.32 L4.04,10.85 L2.85,12.00 L1.00,10.15 L2.15,8.96 L1.68,7.84 L0.03,7.81 L0.03,5.19 L1.68,5.16 L2.15,4.04 L1.00,2.85 L2.85,1.00 L4.04,2.15Z M4.20,6.50 a2.3,2.3 0 1,0 4.6,0 a2.3,2.3 0 1,0 -4.6,0Z"/></svg>
<svg class="abs" style="left:24.60px;top:471.00px" width="15.2" height="11.1" viewBox="0 0 15 11" fill="#fff" ><path fill-rule="evenodd" d="M0,0 H15 V3.1 H0Z M10,1 V2.1 H14 V1Z M0,4 H15 V7.1 H0Z M5.5,5 V6.1 H14 V5Z M0,8 H15 V11 H0Z M8,9 V10.1 H14 V9Z"/></svg>
<svg class="abs" style="left:24.60px;top:521.90px" width="15" height="11.1" viewBox="0 0 15 11" fill="#fff" ><path d="M1.2,0 H13.8 C14.5,0 15,0.5 15,1.2 V1.6 L7.5,6.6 L0,1.6 V1.2 C0,0.5 0.5,0 1.2,0Z"/><path d="M0,2.9 L7.5,7.9 L15,2.9 V9.8 C15,10.5 14.5,11 13.8,11 H1.2 C0.5,11 0,10.5 0,9.8Z"/></svg>
<svg class="abs" style="left:24.60px;top:569.60px" width="13.1" height="14.7" viewBox="0 0 13 15" fill="#fff" ><ellipse cx="6.5" cy="2.3" rx="6.5" ry="2.3"/><path d="M0,3.9 C1.2,5.2 3.8,5.7 6.5,5.7 C9.2,5.7 11.8,5.2 13,3.9 V5.9 C13,7.2 10.1,8.2 6.5,8.2 C2.9,8.2 0,7.2 0,5.9Z"/><path d="M0,7.4 C1.2,8.7 3.8,9.2 6.5,9.2 C9.2,9.2 11.8,8.7 13,7.4 V9.4 C13,10.7 10.1,11.7 6.5,11.7 C2.9,11.7 0,10.7 0,9.4Z"/><path d="M0,10.9 C1.2,12.2 3.8,12.7 6.5,12.7 C9.2,12.7 11.8,12.2 13,10.9 V12.7 C13,14 10.1,15 6.5,15 C2.9,15 0,14 0,12.7Z"/></svg>
<svg class="abs" style="left:24.90px;top:620.90px" width="14.5" height="14" viewBox="0 0 14.5 14" fill="#fff" ><path d="M6.3,0.3 C6.7,-0.1 7.2,-0.1 7.6,0.3 L10.7,3.4 C11.1,3.8 11.1,4.3 10.7,4.7 L10.2,5.2 C9.9,5.5 9.5,5.5 9.1,5.3 L8.4,6 L9.6,7.2 L7.7,9.1 L6.5,7.9 L5.8,8.6 C6,9 6,9.4 5.7,9.7 L5.2,10.2 C4.8,10.6 4.3,10.6 3.9,10.2 L0.8,7.1 C0.4,6.7 0.4,6.2 0.8,5.8 L1.3,5.3 C1.6,5 2,5 2.4,5.2 L5.7,1.9 C5.5,1.5 5.5,1.1 5.8,0.8Z"/><path d="M10.2,7.8 L13.9,11.3 C14.6,12 14.6,12.9 14,13.5 C13.4,14.1 12.5,14.1 11.8,13.4 L8.3,9.7Z"/></svg>
<svg class="abs" style="left:24.60px;top:671.00px" width="13.1" height="14" viewBox="0 0 13 14" fill="#fff" ><path fill-rule="evenodd" d="M0,0 H7.3 V4.7 H13 V14 H0Z M3.2,6 V7 H9.6 V6Z M3.2,8 V9 H9.6 V8Z M3.2,10 V11 H9.6 V10Z"/><path d="M8.2,0 L13,3.8 H8.2Z"/></svg>
<svg class="abs" style="left:24.60px;top:722.80px" width="13.8" height="11" viewBox="0 0 14 11" fill="#fff" ><path d="M0,0 H2.3 C2.9,0 3.2,0.3 3.3,0.9 H14 V6.2 L4.4,7.4 L4.5,7.9 H13.2 V9 H3.3 L2,1.1 H0Z"/><rect x="3.7" y="8.8" width="2.5" height="2.2"/><rect x="10.3" y="8.8" width="2.5" height="2.2"/></svg>
<svg class="abs" style="left:24.60px;top:822.80px" width="17.2" height="11.8" viewBox="0 0 17.2 12" fill="#fff" ><path d="M0,0 H1.5 V10.5 H17.2 V12 H0Z"/><path d="M2.4,8.4 L6.6,4 L8.8,6.2 L11.9,3.1 L10.3,1.5 L15.8,0.9 L15.2,6.4 L13.6,4.8 L8.8,9.6 L6.6,7.4 L3.9,10.1Z"/></svg>
<svg class="abs" style="left:28.40px;top:874.10px" width="14.2" height="10.9" viewBox="0 0 14 11.3" fill="#fff" ><rect x="0" y="0" width="6.5" height="5.4"/><rect x="7.4" y="0" width="6.6" height="5.4"/><rect x="0" y="6.3" width="6.5" height="5"/><rect x="7.4" y="6.3" width="6.6" height="5"/></svg>
<svg class="abs" style="left:24.60px;top:923.90px" width="17" height="13" viewBox="0 0 17 13" fill="#fff" ><path fill-rule="evenodd" d="M3.4,0 H13.6 L17,4.4 L8.5,13 L0,4.4Z M4.1,1.1 L2,3.8 H4.6 L5.6,1.1Z M6.8,1.1 L5.8,3.8 H11.2 L10.2,1.1Z M11.4,1.1 L12.4,3.8 H15 L12.9,1.1Z M2,5 L7.4,10.6 L4.7,5Z M5.9,5 L8.5,10.6 L11.1,5Z M12.3,5 L9.6,10.6 L15,5Z"/></svg>
<svg class="abs" style="left:193px;top:620.40px" width="10" height="12" viewBox="0 0 10 12" fill="none" stroke="#fff" stroke-width="1.5"><path d="M7.3,1.6 L2.6,6 L7.3,10.4"/></svg>
<svg class="abs" style="left:193px;top:721.16px" width="10" height="12" viewBox="0 0 10 12" fill="none" stroke="#fff" stroke-width="1.5"><path d="M7.3,1.6 L2.6,6 L7.3,10.4"/></svg>
<svg class="abs" style="left:193px;top:922.68px" width="10" height="12" viewBox="0 0 10 12" fill="none" stroke="#fff" stroke-width="1.5"><path d="M7.3,1.6 L2.6,6 L7.3,10.4"/></svg>
<div class="abs" style="left:55px;top:892px;width:66px;height:2px;background:#fff"></div>
<div class="t" style="left:1846.80px;top:23px;font-size:14px;color:#8a8e92;transform:scaleX(1.1976);">Logout</div>
<div class="t" style="left:280.29px;top:116px;font-size:15px;color:#222;transform:scaleX(1.0846);">Summary</div>
<div class="t" style="left:426.53px;top:116px;font-size:15px;color:#222;transform:scaleX(1.0927);">Items In</div>
<div class="t" style="left:530.85px;top:116px;font-size:15px;color:#222;transform:scaleX(1.0792);">Items Out</div>
<div class="t" style="left:648.19px;top:116px;font-size:15px;color:#222;transform:scaleX(1.0849);">Settings</div>
<div class="t" style="left:752.97px;top:116px;font-size:15px;color:#1f4e86;transform:scaleX(1.0663);">Item Database</div>
<div class="t" style="left:360.84px;top:120px;font-size:11px;color:#fff;font-weight:700;transform:scaleX(1.0182);">10</div>
<div class="t" style="left:310.12px;top:188px;font-size:24px;color:#111;transform:scaleX(1.1928);">Items</div>
<div class="t" style="left:1582.62px;top:252px;font-size:13px;color:#fff;transform:scaleX(1.0455);-webkit-text-stroke:0.45px #fff;">Add New</div>
<div class="t" style="left:1674.58px;top:252px;font-size:13px;color:#fff;transform:scaleX(1.0760);-webkit-text-stroke:0.45px #fff;">Import Inventory Data</div>
<div class="t" style="left:332.55px;top:293px;font-size:14px;color:#151515;transform:scaleX(1.0452);-webkit-text-stroke:0.1px #151515;">#</div>
<div class="t" style="left:441.30px;top:293px;font-size:14px;color:#151515;transform:scaleX(1.1632);-webkit-text-stroke:0.1px #151515;">Description</div>
<div class="t" style="left:657.21px;top:293px;font-size:14px;color:#151515;transform:scaleX(1.1196);-webkit-text-stroke:0.1px #151515;">Category</div>
<div class="t" style="left:836.52px;top:293px;font-size:14px;color:#151515;transform:scaleX(1.1115);-webkit-text-stroke:0.1px #151515;">Sub Category</div>
<div class="t" style="left:1075.97px;top:293px;font-size:14px;color:#151515;transform:scaleX(1.1318);-webkit-text-stroke:0.1px #151515;">Vendor</div>
<div class="t" style="left:1251.83px;top:293px;font-size:14px;color:#151515;letter-spacing:0.034px;transform:scaleX(1.2200);-webkit-text-stroke:0.1px #151515;">Unit</div>
<div class="t" style="left:1361.07px;top:293px;font-size:14px;color:#151515;transform:scaleX(1.1216);-webkit-text-stroke:0.1px #151515;">Threshold</div>
<div class="t" style="left:1511.01px;top:293px;font-size:14px;color:#151515;transform:scaleX(1.1188);-webkit-text-stroke:0.1px #151515;">Code</div>
<div class="t" style="left:1617.77px;top:293px;font-size:14px;color:#151515;transform:scaleX(1.1130);-webkit-text-stroke:0.1px #151515;">Tags</div>
<div class="t" style="left:1731.55px;top:293px;font-size:14px;color:#151515;transform:scaleX(1.1816);-webkit-text-stroke:0.1px #151515;">Action</div>
<div class="t" style="left:319.14px;top:330px;font-size:14px;color:#5a5a5a;transform:scaleX(0.8600);">1</div>
<div class="t" style="left:384.43px;top:330px;font-size:14px;color:#5a5a5a;transform:scaleX(1.0941);">4&quot; Carpet Base</div>
<div class="t" style="left:610.03px;top:330px;font-size:14px;color:#5a5a5a;transform:scaleX(1.1794);">Flooring</div>
<div class="t" style="left:798.25px;top:330px;font-size:14px;color:#5a5a5a;transform:scaleX(1.1273);">Carpet</div>
<div class="t" style="left:998.96px;top:330px;font-size:14px;color:#5a5a5a;transform:scaleX(1.1198);">Shaw Contract</div>
<div class="t" style="left:1233.17px;top:330px;font-size:14px;color:#5a5a5a;transform:scaleX(1.0621);">LF</div>
<div class="t" style="left:1329.71px;top:330px;font-size:14px;color:#5a5a5a;transform:scaleX(1.0915);">1000</div>
<div class="t" style="left:319.08px;top:374px;font-size:14px;color:#5a5a5a;transform:scaleX(1.2200);">2</div>
<div class="t" style="left:383.91px;top:374px;font-size:14px;color:#5a5a5a;transform:scaleX(1.1919);">Binding wire</div>
<div class="t" style="left:610.65px;top:374px;font-size:14px;color:#5a5a5a;transform:scaleX(1.1296);">Concrete work</div>
<div class="t" style="left:798.25px;top:374px;font-size:14px;color:#5a5a5a;transform:scaleX(1.1273);">Steel</div>
<div class="t" style="left:999.22px;top:374px;font-size:14px;color:#5a5a5a;transform:scaleX(1.1586);">abc</div>
<div class="t" style="left:1233.28px;top:374px;font-size:14px;color:#5a5a5a;transform:scaleX(0.9636);">SF</div>
<div class="t" style="left:1329.88px;top:374px;font-size:14px;color:#5a5a5a;transform:scaleX(1.2200);">2</div>
<div class="t" style="left:319.42px;top:417px;font-size:14px;color:#5a5a5a;transform:scaleX(1.1556);">3</div>
<div class="t" style="left:383.99px;top:417px;font-size:14px;color:#5a5a5a;transform:scaleX(1.1257);">Bricks - Cement</div>
<div class="t" style="left:610.95px;top:417px;font-size:14px;color:#5a5a5a;transform:scaleX(1.1063);">-NA-</div>
<div class="t" style="left:798.54px;top:417px;font-size:14px;color:#5a5a5a;transform:scaleX(1.1207);">-NA-</div>
<div class="t" style="left:999.80px;top:417px;font-size:14px;color:#5a5a5a;transform:scaleX(1.0842);">Acer</div>
<div class="t" style="left:1233.25px;top:417px;font-size:14px;color:#5a5a5a;">Ea</div>
<div class="t" style="left:1329.71px;top:417px;font-size:14px;color:#5a5a5a;transform:scaleX(1.0915);">1000</div>
<div class="t" style="left:319.71px;top:460px;font-size:14px;color:#5a5a5a;transform:scaleX(1.1586);">4</div>
<div class="t" style="left:384.02px;top:460px;font-size:14px;color:#5a5a5a;transform:scaleX(1.1054);">Bricks - clay</div>
<div class="t" style="left:610.95px;top:460px;font-size:14px;color:#5a5a5a;transform:scaleX(1.1063);">-NA-</div>
<div class="t" style="left:798.54px;top:460px;font-size:14px;color:#5a5a5a;transform:scaleX(1.1207);">-NA-</div>
<div class="t" style="left:999.80px;top:460px;font-size:14px;color:#5a5a5a;transform:scaleX(1.1478);">Artifacts Inc</div>
<div class="t" style="left:1233.25px;top:460px;font-size:14px;color:#5a5a5a;">Ea</div>
<div class="t" style="left:1330.19px;top:460px;font-size:14px;color:#5a5a5a;transform:scaleX(1.2200);">0</div>
<div class="t" style="left:319.10px;top:504px;font-size:14px;color:#5a5a5a;transform:scaleX(1.2000);">5</div>
<div class="t" style="left:383.86px;top:504px;font-size:14px;color:#5a5a5a;transform:scaleX(1.1224);">Carpet</div>
<div class="t" style="left:610.95px;top:504px;font-size:14px;color:#5a5a5a;transform:scaleX(1.1063);">-NA-</div>
<div class="t" style="left:798.54px;top:504px;font-size:14px;color:#5a5a5a;transform:scaleX(1.1207);">-NA-</div>
<div class="t" style="left:1233.25px;top:504px;font-size:14px;color:#5a5a5a;">Ea</div>
<div class="t" style="left:1329.88px;top:504px;font-size:14px;color:#5a5a5a;letter-spacing:0.094px;transform:scaleX(1.2200);">60</div>
<div class="t" style="left:319.08px;top:547px;font-size:14px;color:#5a5a5a;transform:scaleX(1.2200);">6</div>
<div class="t" style="left:383.86px;top:547px;font-size:14px;color:#5a5a5a;transform:scaleX(1.1185);">Carpet Tile</div>
<div class="t" style="left:610.03px;top:547px;font-size:14px;color:#5a5a5a;transform:scaleX(1.1794);">Flooring</div>
<div class="t" style="left:798.25px;top:547px;font-size:14px;color:#5a5a5a;transform:scaleX(1.1273);">Carpet</div>
<div class="t" style="left:998.96px;top:547px;font-size:14px;color:#5a5a5a;transform:scaleX(1.1198);">Shaw Contract</div>
<div class="t" style="left:1233.29px;top:547px;font-size:14px;color:#5a5a5a;transform:scaleX(0.9486);">SY</div>
<div class="t" style="left:1329.71px;top:547px;font-size:14px;color:#5a5a5a;transform:scaleX(1.0915);">1000</div>
<div class="t" style="left:319.10px;top:591px;font-size:14px;color:#5a5a5a;transform:scaleX(1.2000);">7</div>
<div class="t" style="left:383.85px;top:591px;font-size:14px;color:#5a5a5a;transform:scaleX(1.1381);">Carpet type A</div>
<div class="t" style="left:610.03px;top:591px;font-size:14px;color:#5a5a5a;transform:scaleX(1.1794);">Flooring</div>
<div class="t" style="left:798.25px;top:591px;font-size:14px;color:#5a5a5a;transform:scaleX(1.1273);">Carpet</div>
<div class="t" style="left:998.95px;top:591px;font-size:14px;color:#5a5a5a;transform:scaleX(1.1301);">Company-A</div>
<div class="t" style="left:1233.29px;top:591px;font-size:14px;color:#5a5a5a;transform:scaleX(0.9486);">SY</div>
<div class="t" style="left:1329.75px;top:591px;font-size:14px;color:#5a5a5a;transform:scaleX(1.0483);">100</div>
<div class="t" style="left:1490.82px;top:591px;font-size:14px;color:#5a5a5a;transform:scaleX(0.8842);">1122</div>
<div class="t" style="left:319.39px;top:634px;font-size:14px;color:#5a5a5a;transform:scaleX(1.2200);">8</div>
<div class="t" style="left:383.85px;top:634px;font-size:14px;color:#5a5a5a;transform:scaleX(1.1306);">Cement - Bags</div>
<div class="t" style="left:610.65px;top:634px;font-size:14px;color:#5a5a5a;transform:scaleX(1.1296);">Concrete work</div>
<div class="t" style="left:798.23px;top:634px;font-size:14px;color:#5a5a5a;transform:scaleX(1.1585);">Cement</div>
<div class="t" style="left:999.80px;top:634px;font-size:14px;color:#5a5a5a;transform:scaleX(1.0069);">ACC</div>
<div class="t" style="left:1233.28px;top:634px;font-size:14px;color:#5a5a5a;transform:scaleX(0.9636);">SF</div>
<div class="t" style="left:1330.19px;top:634px;font-size:14px;color:#5a5a5a;transform:scaleX(1.2200);">0</div>
<div class="t" style="left:319.10px;top:678px;font-size:14px;color:#5a5a5a;transform:scaleX(1.2000);">9</div>
<div class="t" style="left:383.85px;top:678px;font-size:14px;color:#5a5a5a;transform:scaleX(1.1300);">Cement - Blocks</div>
<div class="t" style="left:610.95px;top:678px;font-size:14px;color:#5a5a5a;transform:scaleX(1.1063);">-NA-</div>
<div class="t" style="left:798.54px;top:678px;font-size:14px;color:#5a5a5a;transform:scaleX(1.1207);">-NA-</div>
<div class="t" style="left:1233.25px;top:678px;font-size:14px;color:#5a5a5a;">Ea</div>
<div class="t" style="left:1329.75px;top:678px;font-size:14px;color:#5a5a5a;transform:scaleX(1.0483);">100</div>
<div class="t" style="left:319.01px;top:721px;font-size:14px;color:#5a5a5a;transform:scaleX(0.9857);">10</div>
<div class="t" style="left:383.87px;top:721px;font-size:14px;color:#5a5a5a;transform:scaleX(1.1098);">Ceramic Tile</div>
<div class="t" style="left:610.95px;top:721px;font-size:14px;color:#5a5a5a;transform:scaleX(1.1063);">-NA-</div>
<div class="t" style="left:798.54px;top:721px;font-size:14px;color:#5a5a5a;transform:scaleX(1.1207);">-NA-</div>
<div class="t" style="left:1233.28px;top:721px;font-size:14px;color:#5a5a5a;transform:scaleX(0.9636);">SF</div>
<div class="t" style="left:1329.91px;top:721px;font-size:14px;color:#5a5a5a;transform:scaleX(1.1933);">5000</div>
<div class="t" style="left:319.14px;top:764px;font-size:14px;color:#5a5a5a;letter-spacing:-1.820px;transform:scaleX(0.8600);">11</div>
<div class="t" style="left:383.84px;top:764px;font-size:14px;color:#5a5a5a;transform:scaleX(1.1514);">Conduites</div>
<div class="t" style="left:610.95px;top:764px;font-size:14px;color:#5a5a5a;transform:scaleX(1.1063);">-NA-</div>
<div class="t" style="left:798.54px;top:764px;font-size:14px;color:#5a5a5a;transform:scaleX(1.1207);">-NA-</div>
<div class="t" style="left:999.80px;top:764px;font-size:14px;color:#5a5a5a;transform:scaleX(1.0842);">Acer</div>
<div class="t" style="left:1233.17px;top:764px;font-size:14px;color:#5a5a5a;transform:scaleX(1.0621);">LF</div>
<div class="t" style="left:1330.19px;top:764px;font-size:14px;color:#5a5a5a;transform:scaleX(1.2200);">0</div>
<div class="t" style="left:319.09px;top:808px;font-size:14px;color:#5a5a5a;transform:scaleX(0.9143);">12</div>
<div class="t" style="left:383.91px;top:808px;font-size:14px;color:#5a5a5a;transform:scaleX(1.0547);">Gravel - xx</div>
<div class="t" style="left:610.95px;top:808px;font-size:14px;color:#5a5a5a;transform:scaleX(1.1063);">-NA-</div>
<div class="t" style="left:798.54px;top:808px;font-size:14px;color:#5a5a5a;transform:scaleX(1.1207);">-NA-</div>
<div class="t" style="left:998.91px;top:808px;font-size:14px;color:#5a5a5a;transform:scaleX(1.1817);">Own</div>
<div class="t" style="left:1233.25px;top:808px;font-size:14px;color:#5a5a5a;">Ea</div>
<div class="t" style="left:1330.19px;top:808px;font-size:14px;color:#5a5a5a;transform:scaleX(1.2200);">0</div>
<div class="t" style="left:319.09px;top:851px;font-size:14px;color:#5a5a5a;transform:scaleX(0.9143);">13</div>
<div class="t" style="left:383.92px;top:851px;font-size:14px;color:#5a5a5a;transform:scaleX(1.1803);">Lighting fixtures</div>
<div class="t" style="left:610.95px;top:851px;font-size:14px;color:#5a5a5a;transform:scaleX(1.1063);">-NA-</div>
<div class="t" style="left:798.54px;top:851px;font-size:14px;color:#5a5a5a;transform:scaleX(1.1207);">-NA-</div>
<div class="t" style="left:999.80px;top:851px;font-size:14px;color:#5a5a5a;transform:scaleX(1.1620);">ABC lighting</div>
<div class="t" style="left:1233.25px;top:851px;font-size:14px;color:#5a5a5a;">Ea</div>
<div class="t" style="left:1330.19px;top:851px;font-size:14px;color:#5a5a5a;transform:scaleX(1.2200);">0</div>
<div class="t" style="left:319.03px;top:895px;font-size:14px;color:#5a5a5a;transform:scaleX(0.9684);">14</div>
<div class="t" style="left:384.00px;top:895px;font-size:14px;color:#5a5a5a;transform:scaleX(1.1188);">Luxury Vinyl Tile</div>
<div class="t" style="left:610.03px;top:895px;font-size:14px;color:#5a5a5a;transform:scaleX(1.1794);">Flooring</div>
<div class="t" style="left:798.54px;top:895px;font-size:14px;color:#5a5a5a;transform:scaleX(1.1207);">-NA-</div>
<div class="t" style="left:998.96px;top:895px;font-size:14px;color:#5a5a5a;transform:scaleX(1.1198);">Shaw Contract</div>
<div class="t" style="left:1233.28px;top:895px;font-size:14px;color:#5a5a5a;transform:scaleX(0.9636);">SF</div>
<div class="t" style="left:1329.71px;top:895px;font-size:14px;color:#5a5a5a;transform:scaleX(1.0915);">1000</div>
<div class="t" style="left:319.09px;top:938px;font-size:14px;color:#5a5a5a;transform:scaleX(0.9143);">15</div>
<div class="t" style="left:383.92px;top:938px;font-size:14px;color:#5a5a5a;transform:scaleX(1.1800);">Metal 20mm</div>
<div class="t" style="left:610.95px;top:938px;font-size:14px;color:#5a5a5a;transform:scaleX(1.1063);">-NA-</div>
<div class="t" style="left:798.54px;top:938px;font-size:14px;color:#5a5a5a;transform:scaleX(1.1207);">-NA-</div>
<div class="t" style="left:999.80px;top:938px;font-size:14px;color:#5a5a5a;transform:scaleX(1.0973);">ABC Supplier</div>
<div class="t" style="left:1233.26px;top:938px;font-size:14px;color:#5a5a5a;transform:scaleX(0.9863);">CY</div>
<div class="t" style="left:1329.75px;top:938px;font-size:14px;color:#5a5a5a;transform:scaleX(1.0483);">100</div>
<div class="t" style="left:201.39px;top:13px;font-size:11px;color:#fff;font-weight:700;transform:scaleX(1.2200);">0</div>
<div class="t" style="left:48.66px;top:165px;font-size:16.5px;color:#fff;transform:scaleX(1.1349);-webkit-text-stroke:0.65px #fff;">Demo Account</div>
<div class="t" style="left:73.30px;top:197px;font-size:15px;color:#e6edf5;transform:scaleX(1.1349);">Admin</div>
<div class="t" style="left:54.03px;top:267px;font-size:15px;color:#fff;transform:scaleX(1.0730);-webkit-text-stroke:0.55px #fff;">Dashboard</div>
<div class="t" style="left:50.44px;top:317px;font-size:15px;color:#fff;transform:scaleX(1.0693);-webkit-text-stroke:0.55px #fff;">People</div>
<div class="t" style="left:54.28px;top:368px;font-size:15px;color:#fff;transform:scaleX(1.0664);-webkit-text-stroke:0.55px #fff;">Companies</div>
<div class="t" style="left:53.97px;top:418px;font-size:15px;color:#fff;transform:scaleX(1.1227);-webkit-text-stroke:0.55px #fff;">Equipment</div>
<div class="t" style="left:51.22px;top:469px;font-size:15px;color:#fff;transform:scaleX(1.0093);-webkit-text-stroke:0.55px #fff;">Tasks</div>
<div class="t" style="left:54.03px;top:519px;font-size:15px;color:#fff;transform:scaleX(1.0796);-webkit-text-stroke:0.55px #fff;">Mailbox</div>
<div class="t" style="left:54.04px;top:569px;font-size:15px;color:#fff;transform:scaleX(1.0677);-webkit-text-stroke:0.55px #fff;">Pricing Data</div>
<div class="t" style="left:50.49px;top:620px;font-size:15px;color:#fff;transform:scaleX(1.0301);-webkit-text-stroke:0.55px #fff;">Bids &amp; Proposal</div>
<div class="t" style="left:50.96px;top:670px;font-size:15px;color:#fff;transform:scaleX(1.0848);-webkit-text-stroke:0.55px #fff;">Quote</div>
<div class="t" style="left:50.47px;top:720px;font-size:15px;color:#fff;transform:scaleX(1.0445);-webkit-text-stroke:0.55px #fff;">Purchase Order</div>
<div class="t" style="left:54.09px;top:771px;font-size:15px;color:#fff;transform:scaleX(1.0269);-webkit-text-stroke:0.55px #fff;">Receivables</div>
<div class="t" style="left:50.99px;top:821px;font-size:15px;color:#fff;transform:scaleX(1.0509);-webkit-text-stroke:0.55px #fff;">Schedule Tracking</div>
<div class="t" style="left:54.00px;top:872px;font-size:15px;color:#fff;transform:scaleX(1.0963);-webkit-text-stroke:0.55px #fff;">Inventory</div>
<div class="t" style="left:50.44px;top:922px;font-size:15px;color:#fff;transform:scaleX(1.0714);-webkit-text-stroke:0.55px #fff;">Projects</div>
<div class="t" style="left:24.77px;top:770px;font-size:17px;color:#fff;font-weight:700;transform:scaleX(0.9222);">$</div>
<div id="sb"></div><div id="sbt"></div><div id="bline"></div>
</body></html>
